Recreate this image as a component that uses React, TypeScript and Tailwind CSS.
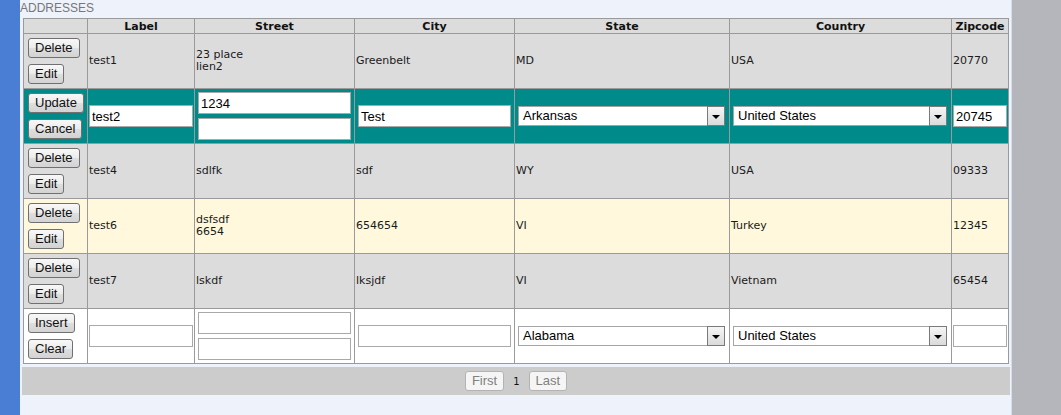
import type { ReactNode } from 'react'

type Row = {
  label: string
  street: string[]
  city: string
  state: string
  country: string
  zip: string
  tone: 'gray' | 'cream'
}

const rowsBefore: Row[] = [
  { label: 'test1', street: ['23 place', 'lien2'], city: 'Greenbelt', state: 'MD', country: 'USA', zip: '20770', tone: 'gray' },
]

const rowsAfter: Row[] = [
  { label: 'test4', street: ['sdlfk'], city: 'sdf', state: 'WY', country: 'USA', zip: '09333', tone: 'gray' },
  { label: 'test6', street: ['dsfsdf', '6654'], city: '654654', state: 'VI', country: 'Turkey', zip: '12345', tone: 'cream' },
  { label: 'test7', street: ['lskdf'], city: 'lksjdf', state: 'VI', country: 'Vietnam', zip: '65454', tone: 'gray' },
]

const cols = ['', 'Label', 'Street', 'City', 'State', 'Country', 'Zipcode']
const widths = ['w-[64px]', 'w-[107px]', 'w-[160px]', 'w-[160px]', 'w-[215px]', 'w-[222px]', 'w-[57px]']

const td = 'h-[55px] border border-[#9a9a9a] p-0 pl-[1px] align-middle'

function Btn({ children }: { children: ReactNode }) {
  return (
    <button className="h-[20px] rounded-[3px] border border-[#707070] bg-[linear-gradient(#f8f8f8,#ececec_48%,#dedede_52%,#d3d3d3)] px-[6px] font-['Liberation_Sans',Arial,sans-serif] text-[13px] leading-[18px] text-[#111]">
      {children}
    </button>
  )
}

function Actions({ a, b }: { a: string; b: string }) {
  return (
    <div className="flex flex-col items-start gap-[6px] pl-[3px]">
      <Btn>{a}</Btn>
      <Btn>{b}</Btn>
    </div>
  )
}

function Field({ value = '', className }: { value?: string; className: string }) {
  return (
    <input
      defaultValue={value}
      className={`block h-[22px] border border-[#a9a9a9] bg-white px-[2px] font-['Liberation_Sans',Arial,sans-serif] text-[13px] text-black outline-none ${className}`}
    />
  )
}

function Picker({ value, className }: { value: string; className: string }) {
  return (
    <div className={`relative h-[20px] ${className}`}>
      <select
        defaultValue={value}
        className="block h-full w-full appearance-none border border-[#a5a5a5] bg-white pl-[4px] font-['Liberation_Sans',Arial,sans-serif] text-[13px] leading-[18px] text-black outline-none"
      >
        <option>{value}</option>
      </select>
      <span className="pointer-events-none absolute inset-y-0 right-0 flex w-[18px] items-center justify-center border border-[#7a7a7a] bg-[linear-gradient(#f6f6f6,#dadada)] pt-[1px]">
        <span className="border-x-[4px] border-t-[4px] border-x-transparent border-t-black" />
      </span>
    </div>
  )
}

function DataRow({ row }: { row: Row }) {
  const bg = row.tone === 'cream' ? 'bg-[#fff8dc]' : 'bg-[#dcdcdc]'
  return (
    <tr className={bg}>
      <td className={td}>
        <Actions a="Delete" b="Edit" />
      </td>
      <td className={td}>{row.label}</td>
      <td className={td}>
        {row.street.map((s) => (
          <div key={s}>{s}</div>
        ))}
      </td>
      <td className={td}>{row.city}</td>
      <td className={td}>{row.state}</td>
      <td className={td}>{row.country}</td>
      <td className={td}>{row.zip}</td>
    </tr>
  )
}

function FormRow({ kind }: { kind: 'edit' | 'insert' }) {
  const edit = kind === 'edit'
  return (
    <tr className={edit ? 'bg-[#008b8b]' : 'bg-white'}>
      <td className={td}>
        {edit ? <Actions a="Update" b="Cancel" /> : <Actions a="Insert" b="Clear" />}
      </td>
      <td className={td}>
        <Field value={edit ? 'test2' : ''} className="w-[104px]" />
      </td>
      <td className={td}>
        <div className="flex flex-col gap-[4px]">
          <Field value={edit ? '1234' : ''} className="ml-[2px] w-[153px]" />
          <Field className="ml-[2px] w-[153px]" />
        </div>
      </td>
      <td className={td}>
        <Field value={edit ? 'Test' : ''} className="ml-[2px] w-[153px]" />
      </td>
      <td className={td}>
        <Picker value={edit ? 'Arkansas' : 'Alabama'} className="ml-[2px] w-[207px]" />
      </td>
      <td className={td}>
        <Picker value="United States" className="ml-[2px] w-[214px]" />
      </td>
      <td className={td}>
        <Field value={edit ? '20745' : ''} className="w-[54px]" />
      </td>
    </tr>
  )
}

export default function App() {
  return (
    <div className="flex h-[415px] w-[1061px] overflow-hidden">
      <div className="w-[20px] shrink-0 bg-[#4a7ed4]" />
      <div className="w-[991px] shrink-0 bg-[#eef2fb]">
        <div className="h-[18px] pt-[1px] font-['Liberation_Sans',Arial,sans-serif] text-[12px] leading-[14px] text-[#777]">
          ADDRESSES
        </div>
        <div className="ml-[2px] w-[988px]">
          <table className="ml-[1px] w-[986px] table-fixed border-collapse font-['DejaVu_Sans',Verdana,sans-serif] text-[11px] leading-[12px] text-[#1a1a1a]">
            <colgroup>
              {widths.map((w, i) => (
                <col key={i} className={w} />
              ))}
            </colgroup>
            <thead>
              <tr className="bg-[#dcdcdc]">
                {cols.map((c, i) => (
                  <th key={i} className="h-[15px] border border-[#9a9a9a] p-0 text-center font-bold leading-[13px] text-[#111]">
                    {c}
                  </th>
                ))}
              </tr>
            </thead>
            <tbody>
              {rowsBefore.map((r) => (
                <DataRow key={r.label} row={r} />
              ))}
              <FormRow kind="edit" />
              {rowsAfter.map((r) => (
                <DataRow key={r.label} row={r} />
              ))}
              <FormRow kind="insert" />
            </tbody>
          </table>
          <div className="mt-[3px] flex h-[28px] items-center justify-center gap-[9px] bg-[#cccccc]">
            <button disabled className="h-[20px] rounded-[3px] border border-[#b3b3b3] bg-[#f5f5f5] px-[6px] font-['Liberation_Sans',Arial,sans-serif] text-[13px] leading-[18px] text-[#808080]">
              First
            </button>
            <span className="font-['DejaVu_Sans',Verdana,sans-serif] text-[10px] text-[#111]">1</span>
            <button disabled className="h-[20px] rounded-[3px] border border-[#b3b3b3] bg-[#f5f5f5] px-[6px] font-['Liberation_Sans',Arial,sans-serif] text-[13px] leading-[18px] text-[#808080]">
              Last
            </button>
          </div>
        </div>
      </div>
      <div className="w-[1px] shrink-0 bg-[#d6deec]" />
      <div className="flex-1 bg-[#b5b6bb]" />
    </div>
  )
}
